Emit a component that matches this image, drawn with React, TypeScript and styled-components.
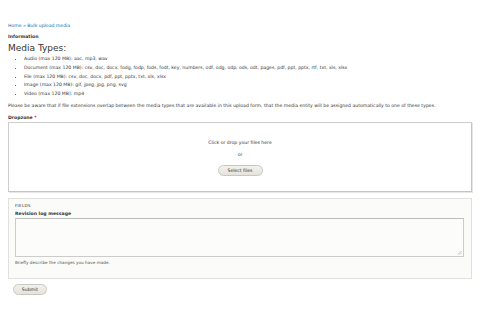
import React from 'react';
import styled, {createGlobalStyle} from 'styled-components';

const text = '#333';
const link = '#0074bd';
const line = '#cdcdcd';

const GlobalStyle = createGlobalStyle`
  html, body {
    margin: 0;
    padding: 0;
    background: #fff;
  }
  body {
    font-family: "DejaVu Sans", Verdana, sans-serif;
    color: ${text};
    font-size: 4.6px;
  }
`;

const Page = styled.div`
  width: 480px;
  height: 320px;
  padding: 21px 8px 0 8px;
  box-sizing: border-box;
  overflow: hidden;
`;

const Breadcrumb = styled.div`
  color: ${link};
  line-height: 10px;
`;

const Label = styled.div`
  font-weight: bold;
  line-height: 12px;
`;

const Title = styled.h2`
  margin: 0;
  font-size: 9px;
  font-weight: normal;
  line-height: 10px;
`;

const TypeList = styled.ul`
  margin: 2px 0 0 0;
  padding: 0 0 0 16px;
  list-style: disc;
`;

const TypeItem = styled.li`
  line-height: 8.8px;
`;

const Note = styled.p`
  margin: 2px 0 0 0;
  line-height: 10px;
`;

const FieldLabel = styled.div`
  margin-top: 3px;
  font-weight: bold;
  line-height: 8px;

  span {
    color: #e62600;
  }
`;

const Dropzone = styled.div`
  height: 70px;
  border: 1px solid ${line};
  border-right-color: #c4c4c4;
  border-bottom-color: #c4c4c4;
  box-shadow: 1px 1px 0 #e6e6e6;
  box-sizing: border-box;
  display: flex;
  flex-direction: column;
  align-items: center;
  padding-top: 14px;
`;

const DropText = styled.div`
  line-height: 12px;
`;

const Button = styled.button<{ $width: number; $top?: number }>`
  width: ${p => p.$width}px;
  height: 11px;
  margin-top: ${p => p.$top ?? 0}px;
  padding: 0;
  border: 1px solid #c8c8c2;
  border-radius: 6px;
  background: linear-gradient(#f2f1eb, #e4e3dd);
  font-family: "DejaVu Sans", Verdana, sans-serif;
  font-size: 4.6px;
  color: #333;
  text-align: center;
`;

const Fieldset = styled.div`
  margin-top: 6px;
  height: 81px;
  border: 1px solid #e0e0dc;
  background: #fbfbf9;
  box-sizing: border-box;
  padding: 4px 7px 0 6px;
`;

const Legend = styled.div`
  font-size: 4.2px;
  letter-spacing: 0.2px;
  line-height: 6px;
  color: #333;
`;

const FieldName = styled.div`
  margin-top: 1px;
  font-weight: bold;
  line-height: 8px;
`;

const TextArea = styled.div`
  height: 39px;
  border: 1px solid #ccc;
  border-top-color: #bdbdbd;
  background: #fcfcfa;
  box-sizing: border-box;
  position: relative;
`;

const Grip = styled.svg`
  position: absolute;
  right: 1px;
  bottom: 1px;
`;

const Help = styled.div`
  margin-top: 3px;
  font-size: 4.2px;
  line-height: 5px;
  color: #555;
`;

const Actions = styled.div`
  margin-top: 5px;
  padding-left: 5px;
`;

const types = [
    'Audio (max 120 MB): aac, mp3, wav',
    'Document (max 120 MB): csv, doc, docx, fodg, fodp, fods, fodt, key, numbers, odf, odg, odp, ods, odt, pages, pdf, ppt, pptx, rtf, txt, xls, xlsx',
    'File (max 120 MB): csv, doc, docx, pdf, ppt, pptx, txt, xls, xlsx',
    'Image (max 120 MB): gif, jpeg, jpg, png, svg',
    'Video (max 120 MB): mp4',
];

export default function App() {
    return (
        <Page>
            <GlobalStyle/>
            <Breadcrumb>Home » Bulk upload media</Breadcrumb>
            <Label>Information</Label>
            <Title>Media Types:</Title>
            <TypeList>
                {types.map(t => <TypeItem key={t}>{t}</TypeItem>)}
            </TypeList>
            <Note>
                Please be aware that if file extensions overlap between the media types that are available in this
                upload form, that the media entity will be assigned automatically to one of these types.
            </Note>
            <FieldLabel>Dropzone <span>*</span></FieldLabel>
            <Dropzone>
                <DropText>Click or drop your files here</DropText>
                <DropText>or</DropText>
                <Button $width={45} $top={4}>Select files</Button>
            </Dropzone>
            <Fieldset>
                <Legend>FIELDS</Legend>
                <FieldName>Revision log message</FieldName>
                <TextArea>
                    <Grip width="5" height="5" viewBox="0 0 5 5">
                        <path d="M1 4.5L4.5 1M3 4.5L4.5 3" stroke="#999" strokeWidth="0.6"/>
                    </Grip>
                </TextArea>
                <Help>Briefly describe the changes you have made.</Help>
            </Fieldset>
            <Actions>
                <Button $width={34}>Submit</Button>
            </Actions>
        </Page>
    );
}
